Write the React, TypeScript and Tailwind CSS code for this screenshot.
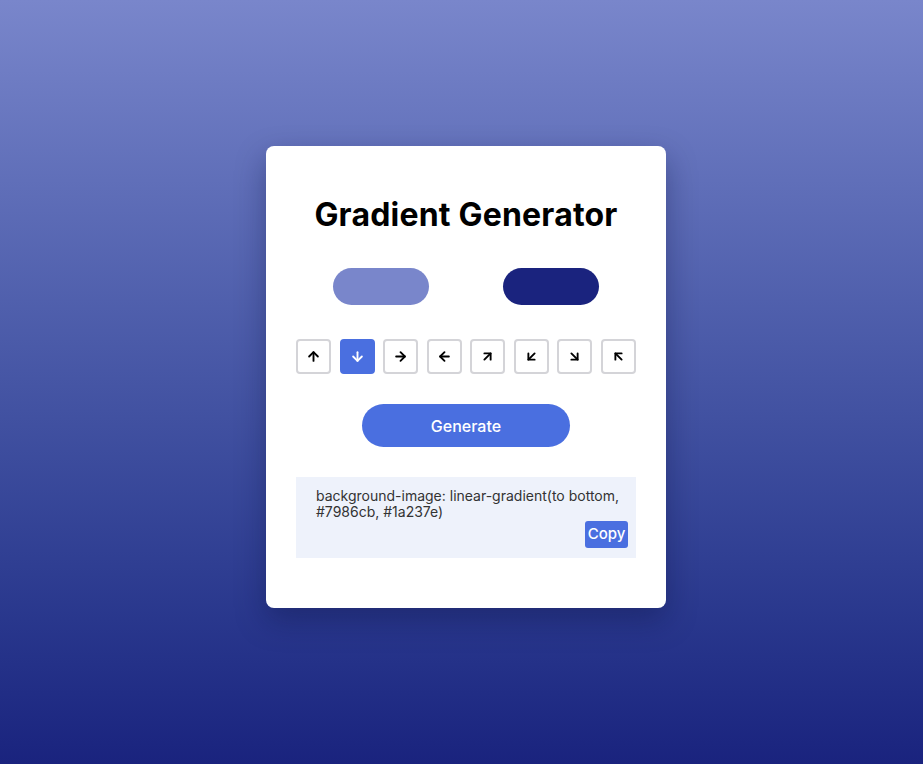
import React from "react";
import {
  ArrowUp,
  ArrowDown,
  ArrowRight,
  ArrowLeft,
  ArrowUpRight,
  ArrowDownLeft,
  ArrowDownRight,
  ArrowUpLeft,
} from "lucide-react";

const arrows = [
  ArrowUp,
  ArrowDown,
  ArrowRight,
  ArrowLeft,
  ArrowUpRight,
  ArrowDownLeft,
  ArrowDownRight,
  ArrowUpLeft,
];

export default function App() {
  return (
    <div
      className="w-full h-[764px] flex items-center justify-center pl-[9px] pb-[10px] bg-gradient-to-b from-[#7986cb] to-[#1a237e]"
      style={{ fontFamily: "Inter, 'Noto Sans', sans-serif" }}
    >
      <div className="w-[400px] bg-white rounded-lg px-[30px] pt-[50px] pb-[50px] shadow-[0_12px_30px_rgba(10,15,60,0.35)] flex flex-col">
        <h1 className="text-[32px] leading-[38px] font-bold text-black text-center tracking-[0.2px]">
          Gradient Generator
        </h1>
        <div className="mt-[34px] flex justify-around">
          <div className="w-[96px] h-[37px] rounded-full bg-[#7986cb]" />
          <div className="w-[96px] h-[37px] rounded-full bg-[#1a237e]" />
        </div>
        <div className="mt-[34px] flex justify-between">
          {arrows.map((Icon, i) => (
            <button
              key={i}
              className={
                i === 1
                  ? "w-[35px] h-[35px] rounded-[4px] bg-[#4a6fe0] border-2 border-[#4a6fe0] flex items-center justify-center text-white"
                  : "w-[35px] h-[35px] rounded-[4px] bg-white border-2 border-[#d4d4d8] flex items-center justify-center text-black"
              }
            >
              <Icon size={15} strokeWidth={3} />
            </button>
          ))}
        </div>
        <div className="mt-[30px] flex justify-center">
          <button className="w-[208px] h-[43px] rounded-full bg-[#4a6fe0] text-white text-[16px] font-medium">
            Generate
          </button>
        </div>
        <div className="mt-[30px] h-[81px] bg-[#eef2fb] pl-[20px] pr-[8px] pt-[11px] pb-[10px] flex flex-col">
          <p className="text-[14px] leading-[16px] text-[#333333]">
            background-image: linear-gradient(to bottom,
            <br />
            #7986cb, #1a237e)
          </p>
          <div className="mt-auto flex justify-end">
            <button className="w-[43px] h-[27px] rounded-[3px] bg-[#4a6fe0] text-white text-[15px] font-medium">
              Copy
            </button>
          </div>
        </div>
      </div>
    </div>
  );
}
